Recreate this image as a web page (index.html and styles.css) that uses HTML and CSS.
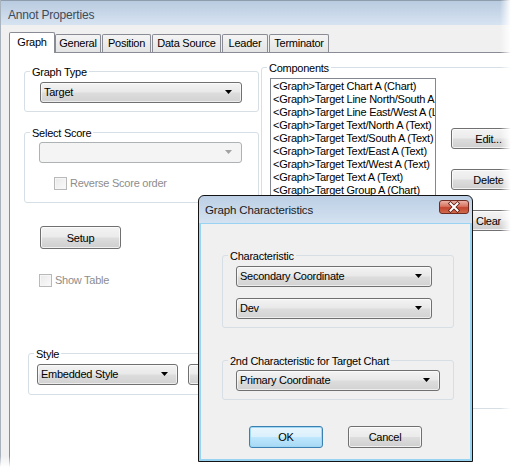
FILE: index.html
```html
<!DOCTYPE html>
<html>
<head>
<meta charset="utf-8">
<title>Annot Properties</title>
<link rel="stylesheet" href="styles.css">
</head>
<body>
<div class="window">
  <div class="titlebar">Annot Properties</div>
  <div class="client">
    <div class="tabs">
      <div class="tab active w-graph">Graph</div>
      <div class="tab w-general">General</div>
      <div class="tab w-position">Position</div>
      <div class="tab w-source">Data Source</div>
      <div class="tab w-leader">Leader</div>
      <div class="tab w-term">Terminator</div>
    </div>
    <div class="page">
      <div class="left">
        <fieldset class="group g-type">
          <legend>Graph Type</legend>
          <div class="gbody">
            <div class="combo c-type"><span>Target</span><svg class="arrow" width="7" height="4" viewBox="0 0 7 4"><polygon points="0,0 7,0 3.5,4"/></svg></div>
          </div>
        </fieldset>
        <fieldset class="group g-score">
          <legend>Select Score</legend>
          <div class="gbody">
            <div class="combo disabled c-score"><span></span><svg class="arrow" width="7" height="4" viewBox="0 0 7 4"><polygon points="0,0 7,0 3.5,4"/></svg></div>
            <div class="check disabled chk-reverse"><span class="box"></span><span>Reverse Score order</span></div>
          </div>
        </fieldset>
        <div class="btn b-setup">Setup</div>
        <div class="check disabled chk-table"><span class="box"></span><span>Show Table</span></div>
        <fieldset class="group g-style">
          <legend>Style</legend>
          <div class="gbody row">
            <div class="combo c-style"><span>Embedded Style</span><svg class="arrow" width="7" height="4" viewBox="0 0 7 4"><polygon points="0,0 7,0 3.5,4"/></svg></div>
            <div class="btn b-style">...</div>
          </div>
        </fieldset>
      </div>
      <div class="right">
        <fieldset class="group g-comp">
          <legend>Components</legend>
          <div class="gbody row">
            <ul class="list">
              <li>&lt;Graph&gt;Target Chart A (Chart)</li>
              <li>&lt;Graph&gt;Target Line North/South A (Line)</li>
              <li>&lt;Graph&gt;Target Line East/West A (Line)</li>
              <li>&lt;Graph&gt;Target Text/North A (Text)</li>
              <li>&lt;Graph&gt;Target Text/South A (Text)</li>
              <li>&lt;Graph&gt;Target Text/East A (Text)</li>
              <li>&lt;Graph&gt;Target Text/West A (Text)</li>
              <li>&lt;Graph&gt;Target Text A (Text)</li>
              <li>&lt;Graph&gt;Target Group A (Chart)</li>
              <li>&lt;Graph&gt;Target Score A (Text)</li>
            </ul>
            <div class="side">
              <div class="btn b-side">Edit...</div>
              <div class="btn b-side">Delete</div>
              <div class="btn b-side">Clear</div>
            </div>
          </div>
        </fieldset>
      </div>
    </div>
  </div>
</div>
<div class="fade-right"></div>
<div class="fade-bottom"></div>
<div class="dialog">
  <div class="dlg-title">
    <span class="dlg-caption">Graph Characteristics</span>
    <span class="close"><svg width="30" height="14" viewBox="0 0 30 14"><path d="M11.5 3.5 L18.5 10.5 M18.5 3.5 L11.5 10.5" stroke="#5a1a10" stroke-width="3.6" stroke-linecap="square" fill="none"/><path d="M11.5 3.5 L18.5 10.5 M18.5 3.5 L11.5 10.5" stroke="#ffffff" stroke-width="2" stroke-linecap="square" fill="none"/></svg></span>
  </div>
  <div class="dlg-body">
    <fieldset class="group d-char">
      <legend>Characteristic</legend>
      <div class="gbody col">
        <div class="combo c-d1"><span>Secondary Coordinate</span><svg class="arrow" width="7" height="4" viewBox="0 0 7 4"><polygon points="0,0 7,0 3.5,4"/></svg></div>
        <div class="combo c-d1 c-gap"><span>Dev</span><svg class="arrow" width="7" height="4" viewBox="0 0 7 4"><polygon points="0,0 7,0 3.5,4"/></svg></div>
      </div>
    </fieldset>
    <fieldset class="group d-second">
      <legend>2nd Characteristic for Target Chart</legend>
      <div class="gbody">
        <div class="combo c-d2"><span>Primary Coordinate</span><svg class="arrow" width="7" height="4" viewBox="0 0 7 4"><polygon points="0,0 7,0 3.5,4"/></svg></div>
      </div>
    </fieldset>
    <div class="dlg-buttons">
      <div class="btn b-dlg default">OK</div>
      <div class="btn b-dlg">Cancel</div>
    </div>
  </div>
</div>
</body>
</html>
```
FILE: styles.css
```css
* { box-sizing: border-box; }
html, body { margin: 0; padding: 0; }
body {
  width: 512px;
  height: 471px;
  overflow: hidden;
  position: relative;
  background: #ffffff;
  font-family: "Liberation Sans", Arial, sans-serif;
  font-size: 11px;
  letter-spacing: -0.25px;
  color: #000;
}

/* main window */
.window {
  width: 560px;
  height: 480px;
  border-left: 1px solid #a9b3be;
  background: #f0f0f0;
}
.titlebar {
  height: 25px;
  padding: 3px 0 0 7px;
  line-height: 22px;
  font-size: 12px;
  letter-spacing: -0.2px;
  color: #3e4b59;
  background: linear-gradient(#b9cbe0, #d7e3f1);
  border-top: 1px solid #8e9cab;
}
.client { padding-left: 8px; }

/* tabs */
.tabs {
  display: flex;
  align-items: flex-end;
  height: 27px;
}
.tab {
  height: 18px;
  margin-left: 1px;
  border: 1px solid #898c95;
  border-bottom: 0;
  border-radius: 2px 2px 0 0;
  background: linear-gradient(#f4f4f4, #e4e4e4);
  line-height: 17px;
  text-align: center;
}
.tab.active {
  height: 21px;
  margin-left: 0;
  margin-bottom: -1px;
  padding-top: 1px;
  background: #fff;
  position: relative;
  z-index: 1;
}
.tab.active + .tab { margin-left: 0; }
.w-graph { width: 46px; }
.w-general { width: 46px; }
.w-position { width: 49px; }
.w-source { width: 69px; }
.w-leader { width: 46px; }
.w-term { width: 60px; }

.page {
  height: 430px;
  border-top: 1px solid #898c95;
  border-left: 1px solid #898c95;
  background: #fff;
  padding-left: 14px;
  display: grid;
  grid-template-columns: 235px 300px;
  column-gap: 2px;
  align-items: start;
}

/* group boxes */
.group {
  margin: 0;
  padding: 0;
  min-width: 0;
  border: 1px solid #d5dfe5;
  border-radius: 3px;
}
.group > legend {
  margin-left: 5px;
  padding: 2px 2px 0;
  line-height: 13px;
}
.row { display: flex; align-items: flex-start; }
.col { display: flex; flex-direction: column; }

.left {
  padding-top: 11px;
  display: flex;
  flex-direction: column;
  align-items: flex-start;
}
.g-type { width: 235px; }
.g-type .gbody { padding: 3px 0 8px 15px; }
.g-score { width: 235px; margin-top: 13px; }
.g-score .gbody { padding: 2px 0 12px 14px; }
.b-setup { margin: 23px 0 0 16px; width: 81px; height: 23px; }
.chk-table { margin: 25px 0 0 15px; }
.g-style { width: 330px; margin: 59px 0 0 4px; }
.g-style .gbody { padding: 3px 0 9px 8px; gap: 10px; }

.right { padding-top: 7px; }
.g-comp { width: 300px; height: 349px; }
.g-comp .gbody { padding: 3px 0 0 8px; }

/* combo boxes */
.combo {
  height: 21px;
  border: 1px solid #707070;
  border-radius: 3px;
  background: linear-gradient(#f3f3f3, #e9e9e9 45%, #dcdcdc 55%, #d2d2d2);
  box-shadow: inset 0 0 0 1px rgba(255,255,255,0.6);
  display: flex;
  align-items: center;
  justify-content: space-between;
  padding: 0 9px 1px 3px;
  white-space: nowrap;
}
.combo .arrow { fill: #000; flex: none; }
.combo.disabled {
  border-color: #adb2b5;
  background: #f4f4f4;
  box-shadow: none;
}
.combo.disabled .arrow { fill: #a3a3a3; }
.c-type { width: 202px; }
.c-score { width: 203px; }
.c-style { width: 141px; }
.c-d1 { width: 196px; }
.c-d2 { width: 204px; }
.c-gap { margin-top: 11px; }

/* check boxes */
.check {
  display: flex;
  align-items: center;
  gap: 3px;
  height: 13px;
  line-height: 13px;
}
.check .box {
  width: 13px;
  height: 13px;
  border: 1px solid #b9b9b9;
  background: linear-gradient(135deg, #e9e9e9, #fafafa);
  box-shadow: inset 0 0 0 1px #f6f6f6;
}
.check.disabled { color: #8d8d8d; }
.chk-reverse { margin: 14px 0 0 15px; }

/* buttons */
.btn {
  border: 1px solid #707070;
  border-radius: 3px;
  background: linear-gradient(#f3f3f3, #ebebeb 48%, #dddddd 52%, #cfcfcf);
  box-shadow: inset 0 0 0 1px rgba(255,255,255,0.7);
  display: flex;
  align-items: center;
  justify-content: center;
  white-space: nowrap;
}
.b-style { width: 75px; height: 21px; }
.b-side { width: 75px; height: 21px; }
.b-side + .b-side { margin-top: 20px; }

/* list */
.list {
  list-style: none;
  margin: 0;
  padding: 1px 0 0 2px;
  width: 166px;
  height: 260px;
  border: 1px solid #828790;
  overflow: hidden;
  white-space: nowrap;
  background: #fff;
}
.list li { line-height: 13px; height: 13px; }
.side { margin: 50px 0 0 15px; }

/* fades at the cropped edges */
.fade-right {
  position: absolute;
  top: 0;
  right: 0;
  width: 12px;
  height: 471px;
  background: linear-gradient(to right, rgba(255,255,255,0), #fff 90%);
}
.fade-bottom {
  position: absolute;
  left: 0;
  bottom: 0;
  width: 512px;
  height: 15px;
  background: linear-gradient(to bottom, rgba(255,255,255,0), #fff 75%);
}

/* dialog */
.dialog {
  position: absolute;
  left: 198px;
  top: 195px;
  width: 275px;
  height: 267px;
  z-index: 5;
  border: 1px solid #141414;
  border-radius: 6px 6px 0 0;
  background: linear-gradient(#bccfe4, #d4e2f1 27px, #98d3f1 27px);
  display: flex;
  flex-direction: column;
}
.dlg-title {
  height: 28px;
  flex: none;
  display: flex;
  justify-content: space-between;
  align-items: flex-start;
  padding: 0 3px 0 6px;
}
.dlg-caption {
  font-size: 11.5px;
  letter-spacing: -0.15px;
  line-height: 13px;
  margin-top: 8px;
  color: #1b1b1b;
}
.close {
  margin-top: 4px;
  width: 30px;
  height: 14px;
  border: 1px solid #6e2c22;
  border-radius: 3px;
  background: linear-gradient(#eab2a5, #d8735f 45%, #c4452f 55%, #cf6a4c);
  display: flex;
}
.close svg { margin: -1px; }
.dlg-body {
  flex: 1;
  margin: 0 2px 2px;
  background: #f0f0f0;
  padding: 24px 0 0 21px;
}
.d-char { width: 232px; }
.d-char .gbody { padding: 3px 0 8px 13px; }
.d-second { width: 232px; margin-top: 25px; }
.d-second .gbody { padding: 2px 0 8px 13px; }
.dlg-buttons {
  display: flex;
  gap: 25px;
  margin: 26px 0 0 27px;
}
.b-dlg { width: 74px; height: 22px; }
.btn.default {
  border-color: #3c7fb1;
  box-shadow: inset 0 0 0 1px #9fd8f5;
  background: linear-gradient(#eaf6fd, #d9f0fc 48%, #bee6fd 52%, #a7d9f5);
}
```
